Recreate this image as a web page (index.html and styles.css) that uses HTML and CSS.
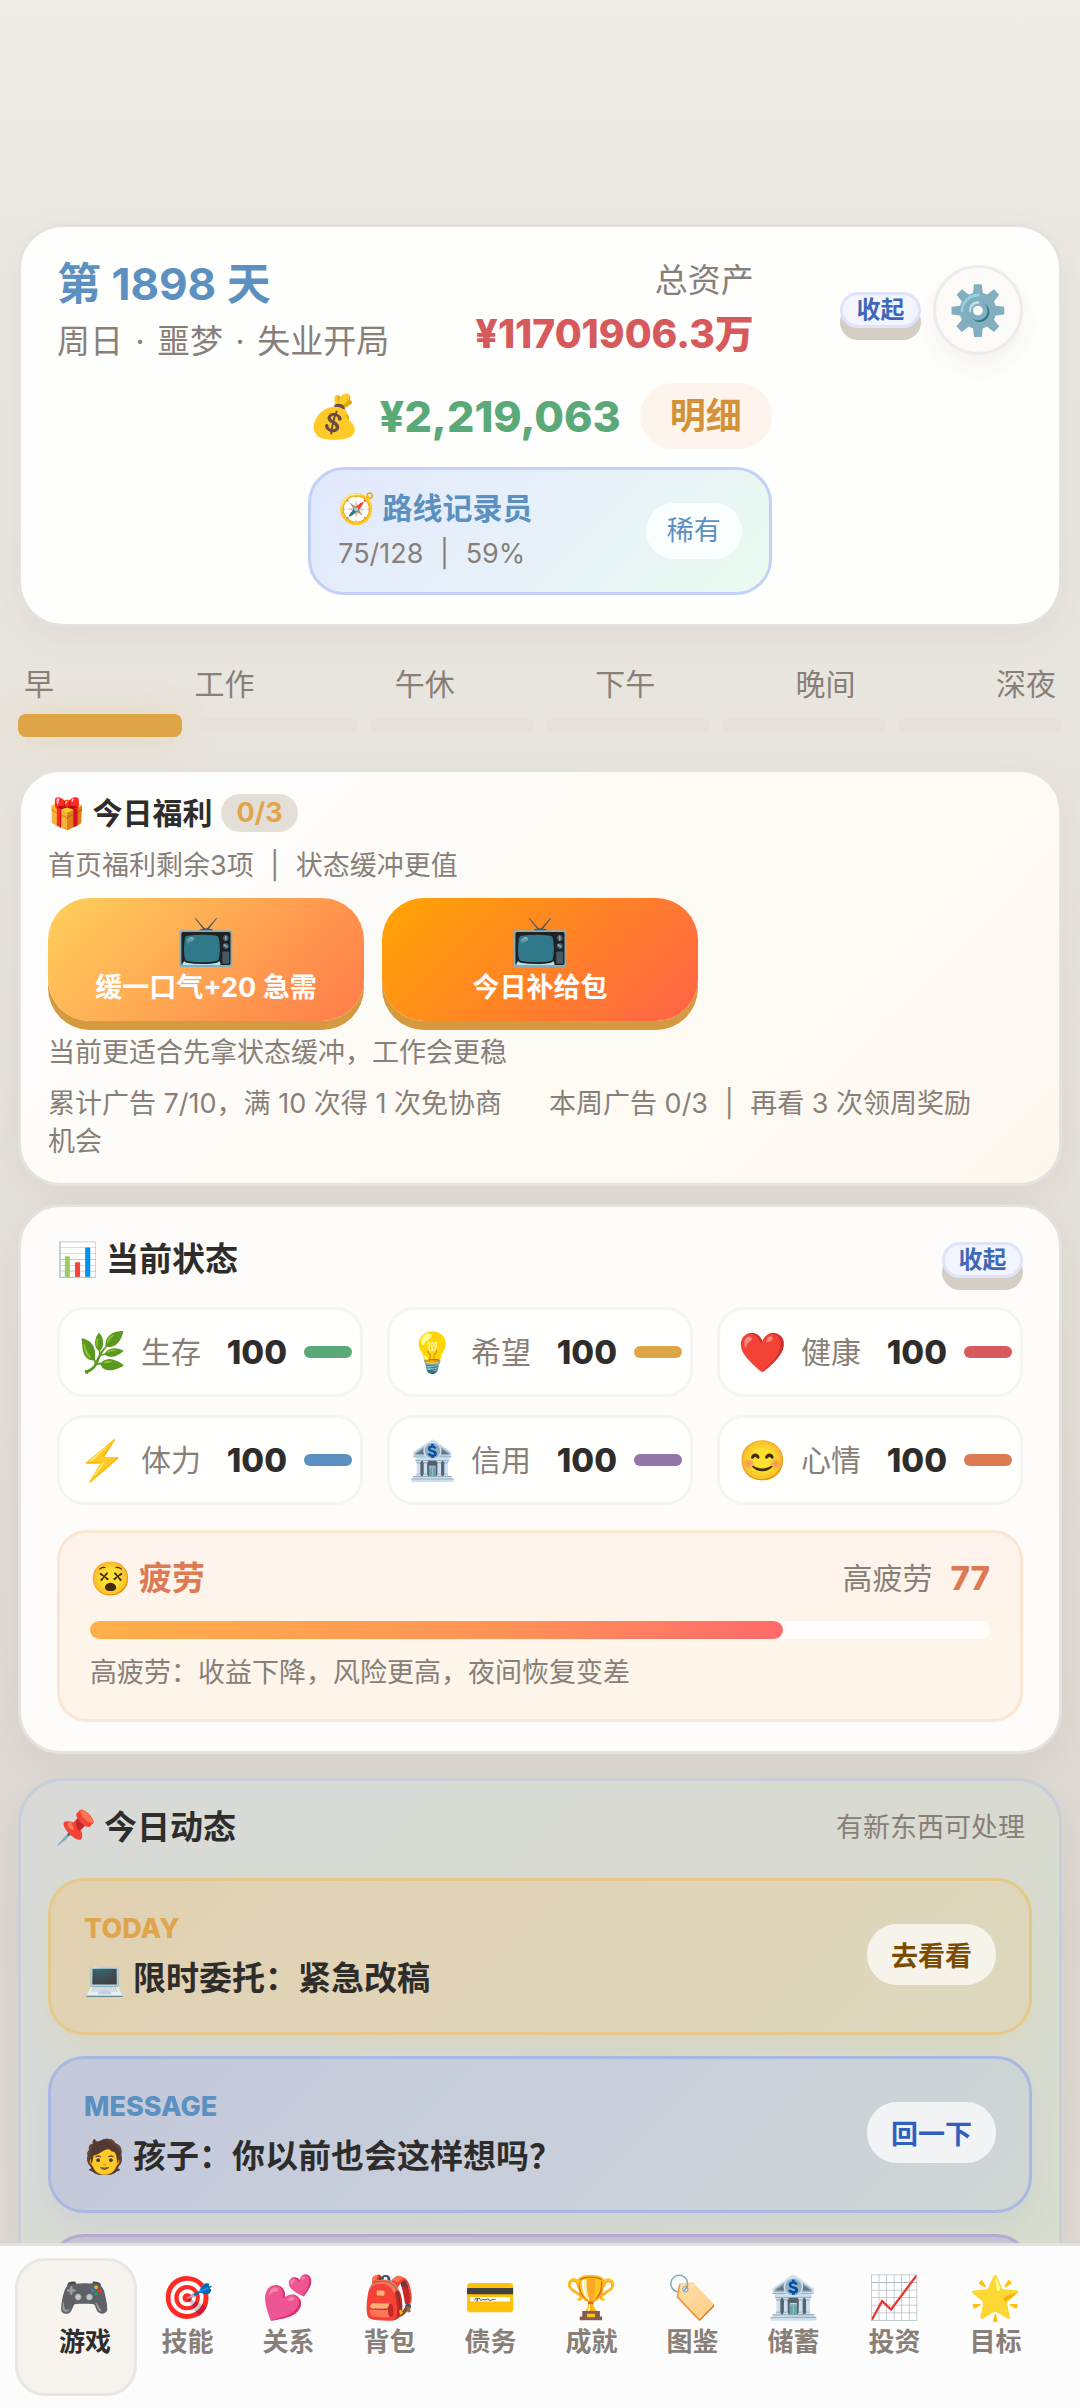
FILE: index.html
```html
<!DOCTYPE html>
<html lang="zh-CN">
<head>
<meta charset="utf-8">
<meta name="viewport" content="width=device-width, initial-scale=1">
<title>第 1898 天</title>
<link rel="stylesheet" href="styles.css">
</head>
<body>
<div class="app">
  <main class="screen">
    <header class="card hero">
      <div class="hero-top">
        <div class="day">
          <h1 class="day-title">第 1898 天</h1>
          <p class="day-sub">周日 <span class="dot">·</span> 噩梦 <span class="dot">·</span> 失业开局</p>
        </div>
        <div class="assets">
          <p class="assets-label">总资产</p>
          <p class="assets-value">¥11701906.3万</p>
        </div>
        <div class="hero-actions">
          <button class="fold" type="button">收起</button>
          <button class="gear" type="button" aria-label="设置">⚙️</button>
        </div>
      </div>
      <div class="hero-center">
        <div class="cash">
          <span class="cash-icon">💰</span>
          <span class="cash-value">¥2,219,063</span>
          <button class="detail" type="button">明细</button>
        </div>
        <div class="route">
          <div>
            <p class="route-title">🧭 路线记录员</p>
            <p class="route-sub">75/128 <span class="sep">|</span> 59%</p>
          </div>
          <span class="route-tag">稀有</span>
        </div>
      </div>
    </header>

    <section class="timeline">
      <div class="time-labels">
        <span>早</span><span>工作</span><span>午休</span><span>下午</span><span>晚间</span><span>深夜</span>
      </div>
      <div class="time-bars">
        <i class="seg seg-now"></i><i class="seg"></i><i class="seg"></i><i class="seg"></i><i class="seg"></i><i class="seg"></i>
      </div>
    </section>

    <section class="card benefits">
      <h2 class="benefits-title">🎁 今日福利 <span class="count">0/3</span></h2>
      <p class="note">首页福利剩余3项 <span class="sep">|</span> 状态缓冲更值</p>
      <div class="rewards">
        <button class="reward reward-soft" type="button"><span class="reward-icon">📺</span>缓一口气+20 急需</button>
        <button class="reward reward-hot" type="button"><span class="reward-icon">📺</span>今日补给包</button>
      </div>
      <p class="note">当前更适合先拿状态缓冲，工作会更稳</p>
      <div class="progress-notes">
        <p class="note">累计广告 7/10，满 10 次得 1 次免协商机会</p>
        <p class="note">本周广告 0/3 <span class="sep">|</span> 再看 3 次领周奖励</p>
      </div>
    </section>

    <section class="card status">
      <div class="status-head">
        <h2 class="title">📊 当前状态</h2>
        <button class="fold" type="button">收起</button>
      </div>
      <div class="stats">
        <div class="stat"><span class="stat-icon">🌿</span><span class="stat-name">生存</span><b class="stat-value">100</b><i class="stat-bar green"></i></div>
        <div class="stat"><span class="stat-icon">💡</span><span class="stat-name">希望</span><b class="stat-value">100</b><i class="stat-bar gold"></i></div>
        <div class="stat"><span class="stat-icon">❤️</span><span class="stat-name">健康</span><b class="stat-value">100</b><i class="stat-bar red"></i></div>
        <div class="stat"><span class="stat-icon">⚡</span><span class="stat-name">体力</span><b class="stat-value">100</b><i class="stat-bar blue"></i></div>
        <div class="stat"><span class="stat-icon">🏦</span><span class="stat-name">信用</span><b class="stat-value">100</b><i class="stat-bar purple"></i></div>
        <div class="stat"><span class="stat-icon">😊</span><span class="stat-name">心情</span><b class="stat-value">100</b><i class="stat-bar orange"></i></div>
      </div>
      <div class="fatigue">
        <div class="fatigue-head">
          <h3 class="fatigue-title">😵 疲劳</h3>
          <p class="fatigue-level">高疲劳 <b class="fatigue-value">77</b></p>
        </div>
        <div class="meter"><div class="meter-fill" style="width: 77%"></div></div>
        <p class="note">高疲劳：收益下降，风险更高，夜间恢复变差</p>
      </div>
    </section>

    <section class="card feed">
      <div class="feed-head">
        <h2 class="title">📌 今日动态</h2>
        <p class="note">有新东西可处理</p>
      </div>
      <article class="item item-today">
        <div>
          <p class="item-kind">TODAY</p>
          <h3 class="item-title">💻 限时委托：紧急改稿</h3>
        </div>
        <button class="go" type="button">去看看</button>
      </article>
      <article class="item item-message">
        <div>
          <p class="item-kind">MESSAGE</p>
          <h3 class="item-title">🧑 孩子：你以前也会这样想吗？</h3>
        </div>
        <button class="go" type="button">回一下</button>
      </article>
      <article class="item item-more"></article>
    </section>
  </main>

  <nav class="tabs">
    <a class="tab tab-active" href="#game"><span class="tab-icon">🎮</span>游戏</a>
    <a class="tab" href="#skills"><span class="tab-icon">🎯</span>技能</a>
    <a class="tab" href="#relations"><span class="tab-icon">💕</span>关系</a>
    <a class="tab" href="#bag"><span class="tab-icon">🎒</span>背包</a>
    <a class="tab" href="#debt"><span class="tab-icon">💳</span>债务</a>
    <a class="tab" href="#achievements"><span class="tab-icon">🏆</span>成就</a>
    <a class="tab" href="#album"><span class="tab-icon">🏷️</span>图鉴</a>
    <a class="tab" href="#savings"><span class="tab-icon">🏦</span>储蓄</a>
    <a class="tab" href="#invest"><span class="tab-icon">📈</span>投资</a>
    <a class="tab" href="#goals"><span class="tab-icon">🌟</span>目标</a>
  </nav>
</div>
</body>
</html>
```

FILE: styles.css
```css
* {
  box-sizing: border-box;
}

body,
h1,
h2,
h3,
p {
  margin: 0;
}

body {
  color: #2f2d2b;
  font-family: Inter, "Noto Sans CJK SC", "Noto Color Emoji", sans-serif;
  font-size: 27px;
  line-height: 38px;
}

button {
  margin: 0;
  padding: 0;
  border: 0;
  font-family: inherit;
  cursor: pointer;
}

.app {
  display: flex;
  flex-direction: column;
  height: 100vh;
  background: linear-gradient(180deg, #edebe6 0%, #ebe8e2 10%, #e8e5df 30%, #e2dfd8 55%, #ddd7d1 80%, #dfdad3 100%);
}

.screen {
  display: flex;
  flex: 1;
  flex-direction: column;
  min-height: 0;
  padding: 224px 18px 0;
  overflow: hidden;
}

.card {
  flex-shrink: 0;
  border: 3px solid #e6e1dc;
  border-radius: 42px;
  background: #fefefd;
  box-shadow: 0 12px 36px rgba(60, 50, 40, 0.06);
}

.title {
  font-size: 33px;
  line-height: 45px;
}

.note {
  color: #888078;
}

.sep {
  margin: 0 9px;
}

.dot {
  margin: 0 3px;
}

/* Summary card */
.hero {
  padding: 30px 36px 29px;
  border-radius: 45px;
}

.hero-top {
  display: flex;
  align-items: center;
  justify-content: space-between;
}

.day-title {
  color: #5b90c0;
  font-size: 44px;
  line-height: 54px;
}

.day-sub {
  margin-top: 9px;
  color: #888078;
  font-size: 33px;
  line-height: 42px;
}

.assets {
  text-align: right;
}

.assets-label {
  color: #888078;
  font-size: 33px;
  line-height: 42px;
}

.assets-value {
  margin-top: 6px;
  color: #d65a5c;
  font-size: 39px;
  font-weight: 800;
  line-height: 54px;
}

.hero-actions {
  display: flex;
  gap: 12px;
  align-items: center;
}

.fold {
  width: 81px;
  height: 36px;
  border: 3px solid #dfe4fa;
  border-radius: 18px;
  background: #f3f5fe;
  box-shadow: 0 12px 0 #d5cec5;
  color: #3f67b8;
  font-size: 24px;
  font-weight: 700;
  line-height: 30px;
}

.gear {
  width: 90px;
  height: 90px;
  border: 3px solid #eeebe8;
  border-radius: 50%;
  background: #fbfaf7;
  box-shadow: 0 12px 30px rgba(60, 50, 40, 0.06);
  font-size: 48px;
  line-height: 84px;
}

.hero-center {
  display: flex;
  flex-direction: column;
  gap: 18px;
  width: 48%;
  margin: 21px auto 0;
}

.cash {
  display: flex;
  align-items: center;
  justify-content: space-between;
  height: 66px;
}

.cash-icon {
  font-size: 42px;
}

.cash-value {
  color: #5aa978;
  font-size: 43px;
  font-weight: 800;
}

.detail {
  width: 132px;
  height: 66px;
  border-radius: 33px;
  background: #fdf5ec;
  color: #d3923a;
  font-size: 36px;
  font-weight: 700;
  line-height: 64px;
}

.route {
  display: flex;
  align-items: center;
  justify-content: space-between;
  padding: 15px 27px;
  border: 3px solid #c2d2f6;
  border-radius: 36px;
  background: linear-gradient(135deg, #e2e8fd, #e6f1f8 50%, #ebfbf0);
}

.route-title {
  color: #5b90c0;
  font-size: 30px;
  font-weight: 700;
  line-height: 46px;
}

.route-sub {
  color: #888078;
  line-height: 46px;
}

.route-tag {
  padding: 9px 21px;
  border-radius: 28px;
  background: #fbfefe;
  color: #5b90c0;
}

/* Time of day */
.timeline {
  flex-shrink: 0;
  padding: 36px 0;
}

.time-labels {
  display: flex;
  justify-content: space-between;
  padding: 0 6px;
  color: #888078;
  font-size: 30px;
  line-height: 42px;
}

.time-bars {
  display: flex;
  gap: 12px;
  align-items: center;
  height: 24px;
  margin-top: 8px;
}

.timeline + .card {
  margin-top: -4px;
}

.seg {
  flex: 1;
  height: 15px;
  border-radius: 8px;
  background: #e6e1db;
}

.seg-now {
  height: 23px;
  background: #dea446;
  box-shadow: 0 0 36px rgba(222, 164, 70, 0.25);
}

/* Daily benefits */
.benefits {
  display: flex;
  flex-direction: column;
  gap: 13px;
  padding: 20px 27px 22px;
  background: linear-gradient(135deg, #fefefe, #fdfaf4 55%, #fdf8f2 90%, #fcf7ea);
}

.benefits-title {
  display: flex;
  gap: 9px;
  align-items: center;
  font-size: 30px;
  line-height: 42px;
}

.count {
  padding: 0 15px;
  border-radius: 19px;
  background: #e4dfd6;
  color: #dfa54d;
  font-size: 27px;
  line-height: 38px;
}

.rewards {
  display: flex;
  gap: 18px;
}

.reward {
  display: flex;
  flex: 0 1 316px;
  flex-direction: column;
  align-items: center;
  height: 123px;
  padding-top: 15px;
  border-radius: 42px;
  box-shadow: 0 9px 0 #d5993f;
  color: #fff;
  font-size: 27px;
  font-weight: 700;
  line-height: 38px;
}

.reward-soft {
  background: linear-gradient(135deg, #ffd05c, #ff7b48);
}

.reward-hot {
  background: linear-gradient(135deg, #ffa502, #ff6348);
}

.reward-icon {
  font-family: "Noto Color Emoji", sans-serif;
  font-size: 48px;
  line-height: 56px;
}

.progress-notes {
  display: grid;
  grid-template-columns: 1fr 1fr;
  gap: 18px;
}

.progress-notes .note {
  padding-right: 12px;
}

/* Status */
.status {
  display: flex;
  flex-direction: column;
  gap: 25px;
  margin-top: 18px;
  padding: 30px 36px 29px;
  background: #fdfcfa;
}

.status-head,
.feed-head,
.fatigue-head {
  display: flex;
  align-items: center;
  justify-content: space-between;
}

.stats {
  display: grid;
  grid-template-columns: repeat(3, 1fr);
  gap: 18px 24px;
}

.stat {
  display: flex;
  align-items: center;
  height: 90px;
  padding: 0 8px 0 18px;
  border: 3px solid #f5f4f3;
  border-radius: 27px;
  background: #fffffe;
}

.stat-icon {
  width: 48px;
  margin-right: 15px;
  font-size: 39px;
  text-align: center;
}

.stat-name {
  color: #888078;
  font-size: 30px;
}

.stat-value {
  margin-left: auto;
  font-size: 33px;
  font-weight: 800;
}

.stat-bar {
  width: 48px;
  height: 12px;
  margin-left: 17px;
  border-radius: 6px;
}

.green { background: #5aa978; }
.gold { background: #dea446; }
.red { background: #d65a5c; }
.blue { background: #5b90c0; }
.purple { background: #9575a9; }
.orange { background: #db7a53; }

.fatigue {
  padding: 24px 30px 27px;
  border: 3px solid #fbe6d2;
  border-radius: 30px;
  background: linear-gradient(180deg, #fef3eb, #fdf5ea);
}

.fatigue-title {
  color: #db7a53;
  font-size: 33px;
  line-height: 42px;
}

.fatigue-level {
  display: flex;
  gap: 18px;
  align-items: center;
  color: #888078;
  font-size: 30px;
}

.fatigue-value {
  color: #db7a53;
  font-size: 33px;
  font-weight: 800;
}

.meter {
  height: 18px;
  margin: 22px 0 15px;
  border-radius: 9px;
  background: #fffdfc;
}

.meter-fill {
  height: 100%;
  border-radius: 9px;
  background: linear-gradient(90deg, #ffb04a, #ff9257 60%, #ff6a6b);
}

/* Activity feed */
.feed {
  display: flex;
  flex-direction: column;
  gap: 21px;
  margin-top: 24px;
  padding: 24px 27px 27px;
  border-color: #c6ced8;
  border-radius: 45px;
  background: linear-gradient(135deg, #d9dad8, #d8dad2 50%, #d8ddcd);
}

.feed-head {
  margin-bottom: 7px;
  padding: 0 7px;
}

.item {
  display: flex;
  align-items: center;
  justify-content: space-between;
  height: 157px;
  padding: 0 33px 4px;
  border: 3px solid;
  border-radius: 36px;
}

.item-kind {
  font-weight: 800;
  line-height: 42px;
}

.item-title {
  margin-top: 4px;
  font-size: 33px;
  line-height: 48px;
}

.item-today {
  border-color: #e5c88a;
  background: linear-gradient(135deg, #e1d1b1, #e0d4b8 50%, #dcd8be);
  box-shadow: 0 12px 24px rgba(222, 190, 90, 0.12);
  color: #dea54d;
}

.item-message {
  border-color: #a9b8e0;
  background: linear-gradient(135deg, #c3c8da, #c8cfdb 50%, #cfd6d3);
  box-shadow: 0 12px 24px rgba(90, 130, 220, 0.08);
  color: #5b90c0;
}

.item-more {
  border-color: #b3abd2;
  background: #c6c2d3;
}

.item .item-title {
  color: #2f2d2b;
}

.go {
  width: 129px;
  height: 61px;
  border-radius: 30px;
  background: #f6f3eb;
  color: #7a4b00;
  font-size: 27px;
  font-weight: 700;
}

.item-message .go {
  background: #f1f3f5;
  color: #2f5fc0;
}

/* Bottom tabs */
.tabs {
  display: flex;
  flex-shrink: 0;
  height: 165px;
  padding: 12px 34px 12px 15px;
  border-top: 3px solid #e6e1da;
  background: #fcfcfc;
}

.tab {
  display: flex;
  flex: 1;
  flex-direction: column;
  align-items: center;
  padding: 12px 0;
  border: 3px solid transparent;
  color: #888078;
  font-size: 26px;
  font-weight: 700;
  line-height: 38px;
  text-decoration: none;
}

.tab-active {
  flex: 0 0 122px;
  padding-left: 18px;
  border-color: #eae6e2;
  border-radius: 30px;
  background: #f7f4f0;
  color: #2f2d2b;
}

.tab-icon {
  font-family: "Noto Color Emoji", sans-serif;
  font-size: 42px;
  line-height: 50px;
}
```
